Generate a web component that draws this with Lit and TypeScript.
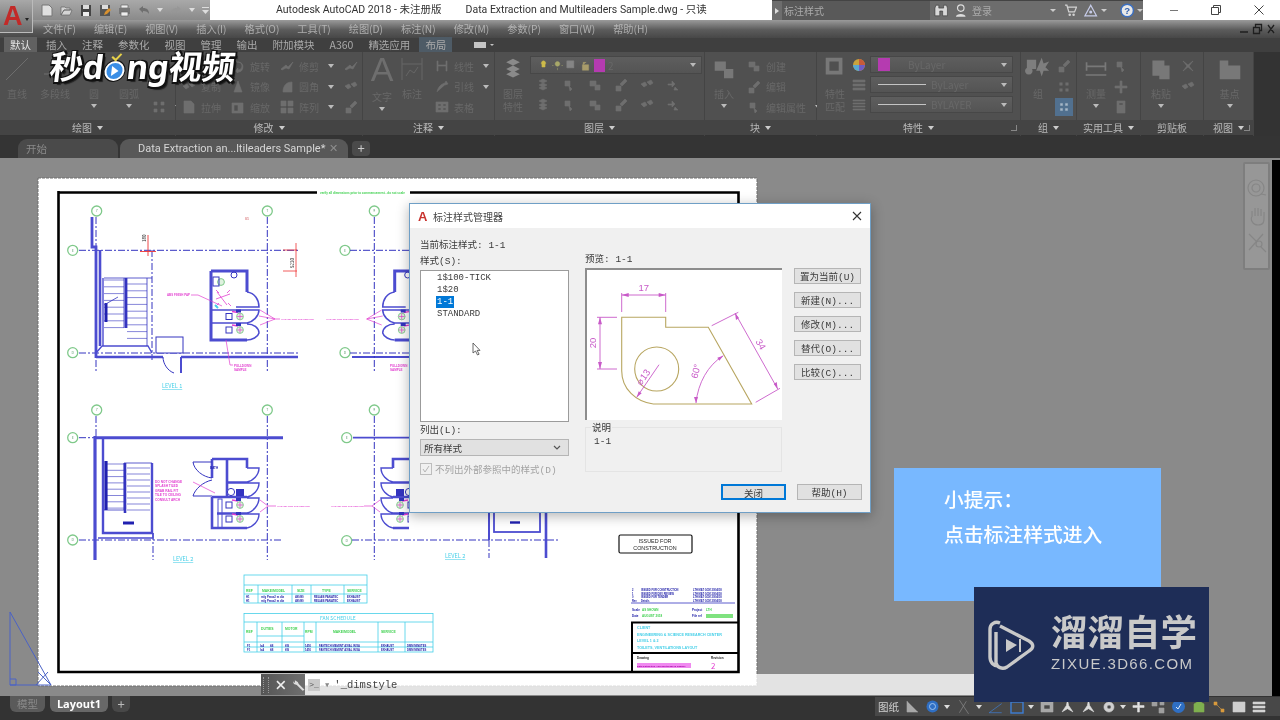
import { LitElement, html, css, svg } from 'lit';
import { customElement } from 'lit/decorators.js';

const CJK = css`"Noto Sans CJK SC", "Noto Sans", sans-serif`;
const MONO = css`"Liberation Mono", "Noto Sans CJK SC", monospace`;

const BLUE = '#3434c0';
const WALL = '#4c4cd0';
const PINK = '#e23fd0';
const CYAN = '#45cfe8';
const GREEN = '#3fd04f';
const RING = '#7fc98a';

// ---------- ribbon icons, all dimmed because the dialog is modal ----------
const ic = (d: string, w = 14, color = '#6e6e6e') => html`<svg width=${w} height=${w} viewBox="0 0 14 14"><path d=${d} fill=${color} stroke=${color} stroke-width="0.6"/></svg>`;
const I = {
  move: 'M2 6h4V3l3 3-3 3V7H2zM9 9l3 3H8z',
  rotate: 'M3 7a4 4 0 1 1 4 4v-2l-3 3 3 2v-1a5 5 0 1 0-5-6z',
  trim: 'M1 10L6 6l2 2 5-5-4 7-3-1-4 2z',
  copy: 'M1 6l4-2 2 3-3 2zM7 4l4-2 2 3-3 2z',
  mirror: 'M7 1L3 12h8z',
  fillet: 'M3 12C3 5 7 2 12 2v10z',
  stretch: 'M2 1h7l3 3v9H2zM5 8h5v4H5z',
  scale: 'M1 3h11v10H1zM3 5v6h4V5z',
  array: 'M1 1h5v5H1zM8 1h5v5H8zM1 8h5v5H1zM8 8h5v5H8z',
  lead: 'M2 12C3 7 6 4 10 3l1-2 2 3-3 1',
  table: 'M1 2h12v10H1zM3 4v2h3V4zM8 4v2h3V4zM3 8v2h3V8zM8 8v2h3V8z',
  linear: 'M2 2h1v10H2zM11 2h1v10h-1zM3 6h8v1H3z',
  layer: 'M3 3l4-2 4 2-4 2zM3 7l4-2 4 2-4 2zM3 10l4-2 4 2-4 2z',
  create: 'M2 3h6v5H2zM7 7h5v5H7z',
  edit: 'M2 8h5v5H2zM6 6l5-5 2 2-5 5z',
  attr: 'M3 3h5v5H3zM7 8l3 3-2 2z',
  plus: 'M6 1h2v5h5v2H8v5H6V8H1V6h5z',
  calc: 'M3 1h8v12H3zM5 3v2h4V3z',
  dots: 'M2 2h3v3H2zM9 2h3v3H9zM2 9h3v3H2zM9 9h3v3H9z',
  x: 'M2 2l5 4 5-4-4 5 4 5-5-4-5 4 4-5z',
};
const arrow = html`<i class="tri"></i>`;

// ---------- the sheet: page coordinates, free canvas ----------
const axis = (x1: number, y1: number, x2: number, y2: number) =>
  svg`<line x1=${x1} y1=${y1} x2=${x2} y2=${y2} stroke=${BLUE} stroke-width="1" stroke-dasharray="7 2 2 2"/>`;
const bubble = (x: number, y: number, t: string) => svg`
  <circle cx=${x} cy=${y} r="5" fill="#fff" stroke=${RING} stroke-width="1.3"/>
  <text x=${x} y=${y + 1.3} font-size="3.6" text-anchor="middle" fill="#5f9f70">${t}</text>`;
const label = (x: number, y: number, t: string, color = PINK, size = 3) =>
  svg`<text x=${x} y=${y} font-size=${size} font-weight="700" fill=${color} font-family="Liberation Sans, sans-serif">${t}</text>`;
const wall = (d: string, w = 2) => svg`<path d=${d} fill="none" stroke=${WALL} stroke-width=${w}/>`;
const thin = (d: string, c = BLUE, w = 0.8) => svg`<path d=${d} fill="none" stroke=${c} stroke-width=${w}/>`;

const fixture = (x: number, y: number) => svg`
  <circle cx=${x} cy=${y} r="3.4" fill="#dff2df" stroke=${RING} stroke-width="0.9"/>
  <path d="M${x - 3} ${y}h6M${x} ${y - 3}v6" stroke=${PINK} stroke-width="0.7"/>
  <rect x=${x - 14} y=${y - 3} width="6" height="6" fill="none" stroke=${BLUE}/>
  <path d="M${x - 8} ${y - 5}l6 1" stroke=${PINK} stroke-width="1.4"/>
  <rect x=${x - 4} y=${y - 7} width="5" height="3" fill=${BLUE}/>`;

const toiletTop = () => svg`
  ${wall('M211 271H247V292M211 271V340H247', 3)}
  ${wall('M247 292C255 293 259 300 259 307H236M212 310H259C259 316 253 322 247 323H212M247 324C254 324 259 328 259 333 258 337 252 340 247 340', 1.5)}
  <circle cx="234" cy="275" r="3" fill="none" stroke=${BLUE}/>
  <circle cx="221" cy="282" r="3.4" fill="#dff2df" stroke=${RING}/>
  <rect x="213" y="277" width="6" height="9" fill="none" stroke=${BLUE}/>
  <path d="M216 299l14-5M217 292l10 13M230 290l-3 3M216 290l3 3M216 306l3-3M231 306l-3-3" stroke=${PINK} stroke-width="0.8"/>
  <path d="M215 305l3 3" stroke=${CYAN} stroke-width="2"/>
  ${fixture(240, 316.5)} ${fixture(240, 330)}`;

const toiletBottom = () => svg`
  ${wall('M212 497H247M212 459H247V468M227 459V496M212 459V478M212 497V528H247', 2.6)}
  ${wall('M247 468H259C259 475 253 481 247 482H227M227 483H259C259 490 253 496 247 497M247 498H259C259 505 253 512 247 513H217M217 514H259C259 521 253 527 247 528', 1.4)}
  ${thin('M193 462H212M193 462C194 470 203 477 212 478M212 480C203 482 195 489 193 496H212', BLUE, 1)}
  <rect x="218" y="499" width="4" height="29" fill="none" stroke=${WALL}/>
  <circle cx="231" cy="492" r="3.6" fill="#fff" stroke=${BLUE}/>
  <rect x="236" y="489" width="8" height="7" fill=${BLUE}/>
  ${fixture(240, 505)} ${fixture(240, 519)}`;

const treads = (x1: number, x2: number, y1: number, n: number, step = 6.8) => {
  const rows = [];
  for (let i = 0; i < n; i++) rows.push(svg`<path d="M${x1} ${y1 + i * step}H${x2}" stroke=${BLUE} stroke-width="0.6"/>`);
  return rows;
};

const sheet = () => html`
  <svg class="sheet" viewBox="0 158 1280 538" width="1280" height="538">
    <rect x="38" y="178" width="719" height="508" fill="#fff" stroke="#6e6e6e" stroke-dasharray="3 1"/>
    <path d="M58.5 192.5H317M410 192.5H738.5V672H58.5V191" fill="none" stroke="#000" stroke-width="2.6"/>
    ${label(320, 194, 'verify all dimensions prior to commencement - do not scale', GREEN, 3)}
    ${label(245, 220, '01', '#d9777a', 3.5)}

    <!-- level 1 -->
    ${axis(79, 250.3, 298, 250.3)} ${axis(79, 353, 298, 353)}
    ${axis(267.3, 217, 267.3, 373)} ${axis(96, 217, 96, 372)} ${axis(152, 250, 152, 360)}
    ${[[96.7, 211, '7'], [267.3, 211, '7'], [374.3, 211, '9']].map(([x, y, t]) => bubble(x as number, y as number, t as string))}
    ${[[72.7, 250.3, 'E'], [72.7, 352.7, 'D'], [345, 250.3, 'E'], [345, 352.7, 'D']].map(([x, y, t]) => bubble(x as number, y as number, t as string))}
    ${wall('M92 217V247H96V358', 2.8)}
    ${wall('M100 250V346M96 357H163M181 357H298', 2.6)}
    ${wall('M102 346H148L152 353M102 346L96 353M103 278V346', 1.4)}
    ${thin('M104 278H152M124 278V328M147 278V346')}
    ${treads(104, 124, 280, 8)} ${treads(127, 147, 284, 9)}
    ${thin('M126 278V328', BLUE, 2.8)}
    ${thin('M106 303V322', '#2020b0', 3)}
    ${thin('M104 305L118 297')}
    <rect x="156" y="337" width="27" height="16" fill="#fff" stroke=${BLUE}/>
    ${thin('M163 357C163 364 168 371 174 373', BLUE, 1)} ${thin('M181 357V373', WALL, 2)}
    ${toiletTop()}
    ${thin('M191 295H198L222 306', PINK, 0.7)} ${label(167, 296, 'ABS FINISH PAP', PINK, 2.9)}
    ${thin('M226 340L230 365H233M260 310L275 319 260 325M259 316L275 319H280', PINK, 0.7)}
    ${label(281, 320, 'HAZARD PIPE THE SERVICE', PINK, 2.4)}
    ${label(234, 367, 'PULLDOWN')} ${label(234, 371, 'SAMPLE')}
    ${thin('M148 235V256M140 251.5H156', '#e33', 0.9)}
    <text transform="translate(145.5 242) rotate(-90)" font-size="4.5" fill="#222">180</text>
    ${thin('M296 243V277M283 271H297M283 250H297', '#e33', 0.8)}
    <text transform="translate(293.5 268) rotate(-90)" font-size="4.5" fill="#222">5230</text>
    <text x="162" y="388" font-size="5.6" fill=${CYAN} text-decoration="underline">LEVEL 1</text>
    ${label(326, 320, 'HAZARD PIPE THE SERVICE', PINK, 2.4)} ${label(390, 367, 'PULLDOWN')} ${label(390, 371, 'SAMPLE')}
    ${wall('M352 357H409', 1.8)} ${axis(350, 250.3, 409, 250.3)} ${axis(350, 353, 409, 353)} ${axis(374.3, 217, 374.3, 372)}
    <svg x="0" y="158" width="409" height="538" viewBox="0 158 409 538"><g transform="translate(641.7 0) scale(-1 1)">
      ${toiletTop()} ${thin('M260 310L275 319 260 325M259 316L275 319', PINK, 0.7)}
    </g></svg>

    <!-- level 2 -->
    ${[[96.7, 410, '7'], [267.3, 410, '7'], [374.3, 410, '9']].map(([x, y, t]) => bubble(x as number, y as number, t as string))}
    ${[[72.7, 437.7, 'E'], [72.7, 540, 'D'], [346.7, 437.7, 'E'], [346.7, 540.7, 'D']].map(([x, y, t]) => bubble(x as number, y as number, t as string))}
    ${axis(267.3, 416, 267.3, 560)} ${axis(96, 416, 96, 436)} ${axis(374.3, 416, 374.3, 560)} ${axis(153, 533, 153, 560)}
    ${axis(79, 540, 283, 540)} ${axis(352, 540, 560, 540)} ${axis(79, 437.7, 96, 437.7)}
    ${wall('M95 437.7H283', 3)} ${wall('M95 436V560', 3.2)} ${wall('M353 437.7H409', 1.8)}
    ${wall('M103 438V533H152V463', 2.4)} ${wall('M98 538H153V533', 1.6)}
    ${thin('M124 463H152M124 463V510M104 510H124')}
    ${treads(105, 124, 464, 8, 6.3)} ${treads(127, 150, 468, 8, 6)}
    ${thin('M125 463V513', BLUE, 2.6)} ${thin('M106 461V510', '#2020b0', 3.2)}
    ${thin('M123 523H134', '#2020b0', 3)}
    ${toiletBottom()}
    ${thin('M193 482L215 493', PINK, 0.7)}
    ${['DO NOT CHANGE', 'SPLASH TILED', 'GRAB RAIL FIT', 'TILE TO CEILING', 'CONSULT ARCH'].map((t, i) => label(155, 483 + i * 4.4, t, PINK, 3.2))}
    ${label(210, 469, 'BATH', '#2020b0', 3)}
    ${thin('M260 500L268 506 260 512M268 506H276', PINK, 0.7)} ${label(277, 507, 'HAZARD PIPE THE SERVICE', PINK, 2.4)}
    ${thin('M364 506H372', PINK, 0.7)} ${label(331, 507, 'HAZARD PIPE THE SERVICE', PINK, 2.4)}
    <svg x="0" y="158" width="409" height="538" viewBox="0 158 409 538"><g transform="translate(640 0) scale(-1 1)">
      ${toiletBottom()} ${thin('M260 500L268 506 260 512', PINK, 0.7)}
    </g></svg>
    <text x="173" y="561" font-size="5.6" fill=${CYAN} text-decoration="underline">LEVEL 2</text>
    <text x="445" y="558" font-size="5.6" fill=${CYAN} text-decoration="underline">LEVEL 2</text>
    <rect x="494" y="510" width="46" height="22" fill="none" stroke=${WALL} stroke-width="1.8"/>
    ${thin('M510 522.5H520', '#2020b0', 2.4)}
    ${thin('M489 510V540', WALL, 2)} ${wall('M546 510V558', 2.6)} ${axis(489, 540, 489, 558)}

    <!-- schedules -->
    <g fill="none" stroke=${CYAN} stroke-width="0.8">
      <rect x="244" y="575" width="123" height="28"/>
      <path d="M244 585H367M244 594H367M258 585V603M292 585V603M311 585V603M344 585V603"/>
      <rect x="244" y="613.5" width="189" height="38.5"/>
      <path d="M244 622H433M244 642H433M244 647H433M257 622V652M282 622V652M304 622V652M316 622V652M378 622V652M405 622V652M282 636H304M257 636H282"/>
    </g>
    ${[['REF', 246], ['MAKE/MODEL', 262], ['SIZE', 297], ['TYPE', 322], ['SERVICE', 347]].map(([t, x]) => label(x as number, 591.5, t as string, GREEN, 3.4))}
    ${[598.5, 602].map((y) => ['H1', 'mfg Pmax2 m dia', '480/80', 'RELIAB PANATEC', 'EXHAUST'].map((t, i) => label([246, 261, 295, 314, 347][i], y - 0.5, t, '#2020a8', 2.8)))}
    <text x="320" y="620" font-size="5" fill=${CYAN}>FAN SCHEDULE</text>
    ${[['REF', 246, 633], ['DUTIES', 261, 630], ['MOTOR', 285, 630], ['RPM', 305, 633], ['MAKE/MODEL', 333, 633], ['SERVICE', 381, 633]].map(([t, x, y]) => label(x as number, y as number, t as string, GREEN, 3.4))}
    ${[647, 651.4].map((y) => ['F1', 'lsA', 'kB', 'kW', '1450', 'FANTECH MAVENT AXIAL IN/3A', 'EXHAUST', 'DMM MINUTES'].map((t, i) => label([247, 260, 270, 285, 305, 319, 381, 407][i], y - 0.4, t, '#2020a8', 2.7)))}

    <!-- title block -->
    <rect x="619" y="535" width="73" height="18" rx="1.5" fill="#fff" stroke="#111" stroke-width="1.2"/>
    <text x="655" y="543" font-size="5.4" fill="#222" text-anchor="middle" font-family="Liberation Sans, sans-serif">ISSUED FOR</text>
    <text x="655" y="550" font-size="5.4" fill="#222" text-anchor="middle" font-family="Liberation Sans, sans-serif">CONSTRUCTION</text>
    ${[591, 594.5, 598, 602].map((y, i) => svg`
      ${label(632, y, ['2', '1', '0', 'Rev'][i], '#2020a8', 2.6)}
      ${label(641, y, ['ISSUED FOR CONSTRUCTION', 'ISSUED FOR DEV REVIEW', 'ISSUED FOR TENDER', 'Details'][i], '#2020a8', 2.6)}
      ${label(693, y, 'LTH   MAT  GCM   20/04/18', '#2020a8', 2.6)}`)}
    ${thin('M631 603H735')}
    ${label(632, 611, 'Scale', '#2020a8', 3)} ${label(642, 611, 'AS SHOWN', GREEN, 3)}
    ${label(692, 611, 'Project', '#2020a8', 3)} ${label(706, 611, 'LTH', GREEN, 3)}
    ${label(632, 617, 'Date', '#2020a8', 3)} ${label(642, 617, 'AUGUST 2018', GREEN, 3)}
    ${label(692, 617, 'File ref', '#2020a8', 3)}
    <rect x="706" y="614" width="27" height="4" fill="#7fe27f"/>
    ${thin('M632 672V622.5H738M632 653H738', '#000', 2)}
    ${['CLIENT', 'ENGINEERING & SCIENCE RESEARCH CENTER', 'LEVEL 1 & 2', 'TOILETS, VENTILATIONS LAYOUT'].map((t, i) => label(637, 629 + i * 6.6, t, CYAN, 3.7))}
    ${label(637, 659, 'Drawing', '#222', 3)} ${label(711, 659, 'Revision', '#222', 3)}
    <rect x="637" y="663" width="54" height="5" fill="#f08af0"/>
    ${label(637, 667, 'Data Extraction And Multileaders Sample', '#a000a0', 2.5)}
    <text x="711" y="669" font-size="8" fill=${PINK}>2</text>

    <!-- ucs -->
    <g fill="none" stroke="#4a62c6" stroke-width="1">
      <path d="M10 612V685H51ZM10 679h6v6h-6M36 685L48 672M38 672L51 685"/>
    </g>
  </svg>`;

// ---------- preview pane of the dialog ----------
const preview = () => html`
  <svg class="preview" viewBox="585 269 197 151" width="197" height="151">
    <g fill="none" stroke="#b8a661" stroke-width="1.1">
      <path d="M621.7 318.3H665.7V328.3H708.3L751.7 405H653.3C636 403 621.7 390 621.7 371.7Z"/>
      <circle cx="656.7" cy="370" r="22"/>
    </g>
    <g fill="none" stroke="#c85ac8" stroke-width="0.9">
      <path d="M621.7 313V294M665.7 313V294M621.7 296H665.7"/>
      <path d="M617 318.3H597M617 370H597M600 318.3V370"/>
      <path d="M711.7 326.7L738.3 313.3M755.7 403.3L780 389.3M735 314L777.7 390"/>
      <path d="M696 404C698 384 708 366 723.3 356.7"/>
      <path d="M659 365.7L636.7 398.3"/>
    </g>
    <g fill="#c85ac8">
      <path d="M621.7 296l7-2v4zM665.7 296l-7-2v4zM600 318.3l-2 7h4zM600 370l-2-7h4zM735 314l1 7 3-2zM777.7 390l-1-7-3 2zM723.3 356.7l-6 2 2 3zM696 404l-2-6 4 0zM636.7 398.3l2-6 3 2z"/>
    </g>
    <g fill="#c85ac8" font-size="9.5" font-family="Liberation Sans Narrow, Liberation Sans, sans-serif" text-anchor="middle">
      <text x="643.7" y="292">17</text>
      <text transform="translate(596 344) rotate(-90)">20</text>
      <text transform="translate(758 347) rotate(60)">34</text>
      <text transform="translate(699 373) rotate(-75)">60°</text>
      <text transform="translate(646 380) rotate(-55)">⌀13</text>
    </g>
  </svg>`;

@customElement('dim-dialog')
export class DimDialog extends LitElement {
  static styles = css`
    :host {
      position: absolute;
      left: 409px;
      top: 45px;
      width: 462px;
      height: 310px;
      box-sizing: border-box;
      display: flex;
      flex-direction: column;
      background: #f0f0f0;
      border: 1px solid #6f9fc6;
      box-shadow: 0 3px 12px rgba(0, 0, 0, 0.3);
      font: 9.5px ${MONO};
      color: #3a3a3a;
    }
    .title {
      height: 24px;
      flex: none;
      background: #fff;
      display: flex;
      align-items: center;
      padding: 0 8px;
      gap: 5px;
      font: 10px ${CJK};
      color: #444;
    }
    .logo { font: bold 13px "Liberation Sans", sans-serif; color: #c8322d; width: 10px; }
    .close { margin-left: auto; width: 10px; height: 10px; }
    .main {
      flex: 1;
      display: grid;
      grid-template-columns: 149px 196px 67px;
      grid-template-rows: 15px 1fr;
      column-gap: 16px;
      padding: 10px 0 0 10px;
      position: relative;
    }
    .current { grid-column: 1 / 4; height: 15px; line-height: 15px; }
    .col { display: flex; flex-direction: column; }
    .head { height: 17px; line-height: 17px; }
    .head.up { margin-top: -2px; }
    .list {
      height: 152px;
      box-sizing: border-box;
      background: #fff;
      border: 1px solid #9b9b9b;
      padding: 1px 0 0 16px;
      display: flex;
      flex-direction: column;
      align-items: flex-start;
      font-size: 9px;
      line-height: 12px;
    }
    .list .sel { background: #0078d7; color: #fff; padding: 0 1px; margin-left: -1px; }
    .sub { height: 17px; line-height: 18px; }
    .select {
      height: 17px;
      box-sizing: border-box;
      background: #e1e1e1;
      border: 1px solid #b5b5b5;
      font-family: ${CJK};
      padding: 0 7px 0 3px;
      display: flex;
      align-items: center;
      justify-content: space-between;
    }
    .check { display: flex; align-items: center; gap: 3px; margin-top: 6px; color: #a3a3a3; }
    .box { width: 10px; height: 10px; border: 1px solid #bdbdbd; display: flex; }
    .pane {
      width: 197px;
      height: 152px;
      box-sizing: border-box;
      background: #fff;
      border-left: 2px solid #8d8d8d;
      border-top: 2px solid #8d8d8d;
      overflow: hidden;
    }
    .pane svg { display: block; margin: -2px 0 0 -2px; }
    .note {
      margin-top: 7px;
      height: 45px;
      width: 197px;
      box-sizing: border-box;
      border: 1px solid #e4e4e4;
      padding: 8px 0 0 8px;
      position: relative;
    }
    .legend { position: absolute; top: -8px; left: 5px; padding: 0 1px; background: #f0f0f0; }
    .btns { display: flex; flex-direction: column; gap: 8px; padding-top: 15px; margin-left: -3px; }
    button {
      box-sizing: border-box;
      height: 16px;
      width: 67px;
      padding: 0;
      background: #e1e1e1;
      border: 1px solid #b5b5b5;
      font: 9.5px ${MONO};
      color: #3a3a3a;
    }
    .foot { position: absolute; right: 8px; bottom: 12px; display: flex; gap: 11px; }
    .foot button { width: 65px; }
    .foot .ok { border: 2px solid #0078d7; }
    .cursor { position: absolute; left: 62px; top: 114px; }
  `;

  render() {
    return html`
      <div class="title">
        <span class="logo">A</span><span>标注样式管理器</span>
        <svg class="close" viewBox="0 0 10 10"><path d="M1 1l8 8M9 1l-8 8" stroke="#333" stroke-width="1.1"/></svg>
      </div>
      <div class="main">
        <div class="current">当前标注样式: 1-1</div>
        <div class="col">
          <div class="head">样式(S):</div>
          <div class="list">
            <span>1$100-TICK</span><span>1$20</span><span class="sel">1-1</span><span>STANDARD</span>
          </div>
          <div class="sub">列出(L):</div>
          <div class="select">所有样式
            <svg width="8" height="6" viewBox="0 0 8 6"><path d="M1 1l3 3 3-3" fill="none" stroke="#555" stroke-width="1.2"/></svg>
          </div>
          <div class="check">
            <span class="box"><svg viewBox="0 0 10 10"><path d="M2 5l2 3 4-6" fill="none" stroke="#b5b5b5"/></svg></span>
            不列出外部参照中的样式(D)
          </div>
        </div>
        <div class="col">
          <div class="head up">预览: 1-1</div>
          <div class="pane">${preview()}</div>
          <div class="note"><span class="legend">说明</span>1-1</div>
        </div>
        <div class="btns">
          <button>置为当前(U)</button>
          <button>新建(N)...</button>
          <button>修改(M)...</button>
          <button>替代(O)...</button>
          <button>比较(C)...</button>
        </div>
        <svg class="cursor" width="9" height="14" viewBox="0 0 9 14"><path d="M1 1v10l2.5-2 2 4 1.6-.8-2-3.800H8z" fill="#fff" stroke="#444" stroke-width="0.8"/></svg>
      </div>
      <div class="foot"><button class="ok">关闭</button><button>帮助(H)</button></div>
    `;
  }
}

@customElement('cad-ribbon')
export class CadRibbon extends LitElement {
  static styles = css`
    :host { display: flex; height: 84px; flex: none; background: #333; font: 10px ${CJK}; color: #686868; }
    .p { display: flex; flex-direction: column; flex: none; background: #505050; border-right: 1px solid #444; box-sizing: border-box; }
    .b { height: 68px; display: flex; padding: 4px 4px 0 6px; box-sizing: border-box; gap: 6px; }
    .t { height: 15px; background: #444; display: flex; align-items: center; justify-content: center; gap: 5px; color: #b8b8b8; border-bottom: 1px solid #333; position: relative; }
    .tri { display: inline-block; border: 3px solid transparent; border-top: 4px solid currentColor; border-bottom: 0; }
    .t .tri { color: #ccc; }
    .t .corner { position: absolute; right: 3px; width: 5px; height: 5px; border-right: 1px solid #888; border-bottom: 1px solid #888; }
    .big { display: flex; flex-direction: column; align-items: center; gap: 1px; line-height: 12px; flex: none; width: 26px; }
    .big .tri { color: #bbb; margin-top: 3px; }
    .big svg { margin-bottom: 5px; }
    .rows { display: grid; grid-auto-rows: 20.5px; align-items: center; justify-items: center; }
    .rows.lab { justify-items: start; }
    .s { display: flex; align-items: center; gap: 5px; white-space: nowrap; }
    .s .tri { color: #bbb; margin-left: 4px; }
    .w22 { width: 22px; }
    .w24 { width: 24px; }
    .w32 { width: 32px; }
    .w42 { width: 42px; }
    .w48 { width: 48px; }
    .w60 { width: 60px; }
    .draw { width: 176px; }
    .draw .b { gap: 11px; }
    .draw .low { padding-top: 41px; }
    .modify { width: 187px; }
    .modify .b { gap: 10px; }
    .note { width: 132px; }
    .note .b { gap: 8px; padding-left: 8px; }
    .note .glyph { font: 34px/32px "Liberation Sans", sans-serif; color: #6e6e6e; margin-bottom: 5px; }
    .note .up { margin-top: -3px; }
    .note .rows { margin-left: 4px; }
    .layers { width: 210px; }
    .layers .b { gap: 5px; }
    .layers .right { flex: 1; }
    .layers .dd { gap: 3px; width: 172px; height: 18px; }
    .layers .swatch { width: 11px; }
    .layers .rows { grid-template-columns: repeat(6, 26px); grid-auto-rows: 20px; margin-top: 1px; }
    .block { width: 112px; }
    .block .b { gap: 10px; }
    .props { width: 204px; }
    .props .b { gap: 4px; padding-left: 5px; }
    .props .rows { grid-auto-rows: 20px; margin-top: -1px; }
    .props .stack { flex: 1; display: flex; flex-direction: column; gap: 3px; margin-right: 3px; }
    .props .swatch { margin-right: 13px; }
    .group { width: 56px; }
    .group .b { gap: 4px; padding-left: 4px; }
    .util { width: 64px; }
    .util .b { padding-left: 7px; }
    .clip { width: 63px; }
    .clip .b { gap: 8px; padding-left: 8px; }
    .view { width: 50px; }
    .view .b { justify-content: center; }
    .dd {
      height: 17px;
      box-sizing: border-box;
      background: linear-gradient(#5e5e5e, #545454);
      border: 1px solid #474747;
      display: flex;
      align-items: center;
      padding: 0 5px 0 7px;
      gap: 5px;
    }
    .dd .tri { margin-left: auto; color: #bbb; }
    .swatch { width: 12px; height: 13px; background: #b53bb0; flex: none; }
    .line { height: 1px; background: #c4c4c4; width: 48px; flex: none; }
    .blue { width: 18px; height: 18px; background: #51708f; display: flex; align-items: center; justify-content: center; }
  `;

  private head(t: string, corner = false, showArrow = true) {
    return html`<div class="t">${t}${showArrow ? arrow : ''}${corner ? html`<i class="corner"></i>` : ''}</div>`;
  }

  private small(icon: string, text = '', more = false) {
    return html`<div class="s">${ic(icon)}<span>${text}</span>${more ? arrow : ''}</div>`;
  }

  render() {
    const layerIcons = [I.layer, I.attr, I.create, I.edit, I.copy, I.move];
    return html`
      <div class="p draw">
        <div class="b">
          <div class="big w22"><svg width="26" height="26" viewBox="0 0 26 26"><path d="M2 24L24 2" stroke="#6e6e6e"/></svg>直线</div>
          <div class="big w32"><svg width="26" height="26" viewBox="0 0 26 26"><path d="M2 18H16" stroke="#6e6e6e"/></svg>多段线</div>
          <div class="big w24"><svg width="26" height="26"></svg>圆${arrow}</div>
          <div class="big w24"><svg width="26" height="26"></svg>圆弧${arrow}</div>
          <div class="rows low"><div class="s">${ic(I.dots)}${arrow}</div></div>
        </div>
        ${this.head('绘图')}
      </div>
      <div class="p modify">
        <div class="b">
          <div class="rows lab w48">${this.small(I.move, '移动')}${this.small(I.copy, '复制')}${this.small(I.stretch, '拉伸')}</div>
          <div class="rows lab w42">${this.small(I.rotate, '旋转')}${this.small(I.mirror, '镜像')}${this.small(I.scale, '缩放')}</div>
          <div class="rows lab w60">${this.small(I.trim, '修剪', true)}${this.small(I.fillet, '圆角', true)}${this.small(I.array, '阵列', true)}</div>
          <div class="rows">${this.small(I.trim)}${this.small(I.copy)}${this.small(I.edit)}</div>
        </div>
        ${this.head('修改')}
      </div>
      <div class="p note">
        <div class="b">
          <div class="big w22 up"><span class="glyph">A</span>文字${arrow}</div>
          <div class="big w22"><svg width="24" height="26" viewBox="0 0 24 26"><path d="M2 2V24M22 2V24M2 8H22M6 20l4-6 4 3 4-6" fill="none" stroke="#666"/></svg>标注</div>
          <div class="rows lab">${this.small(I.linear, '线性', true)}${this.small(I.lead, '引线', true)}${this.small(I.table, '表格')}</div>
        </div>
        ${this.head('注释')}
      </div>
      <div class="p layers">
        <div class="b">
          <div class="big w24"><svg width="24" height="26" viewBox="0 0 14 14"><path d=${I.layer} fill="#8a8a8a"/></svg>图层<span>特性</span></div>
          <div class="right">
            <div class="dd">
              ${ic('M7 1a3 3 0 0 1 2 5v3H5V6a3 3 0 0 1 2-5z', 11, '#cdbb4a')}
              ${ic('M7 2a3 3 0 1 1-.1 0zM7 10v3M2 7H0M14 7h-2', 11, '#a8a869')}
              ${ic('M1 1h9v9H1z', 11, '#858585')}
              ${ic('M3 6h8v7H3zM4 6V3h4', 11, '#a99c6b')}
              <span class="swatch"></span><span>2</span>${arrow}
            </div>
            <div class="rows">
              ${layerIcons.map((d) => ic(d))}
              ${layerIcons.map((d) => ic(d))}
            </div>
          </div>
        </div>
        ${this.head('图层')}
      </div>
      <div class="p block">
        <div class="b">
          <div class="big"><svg width="26" height="26" viewBox="0 0 14 14"><path d=${I.create} fill="#787878"/></svg>插入${arrow}</div>
          <div class="rows lab">${this.small(I.create, '创建')}${this.small(I.edit, '编辑')}${this.small(I.attr, '编辑属性', true)}</div>
        </div>
        ${this.head('块')}
      </div>
      <div class="p props">
        <div class="b">
          <div class="big"><svg width="26" height="26" viewBox="0 0 14 14"><path d="M2 1h9v9H2zM4 3v5h5V3z" fill="#787878"/></svg>特性<span>匹配</span></div>
          <div class="rows">
            <svg width="14" height="14" viewBox="0 0 14 14"><circle cx="7" cy="7" r="6" fill="#c9a33c"/><path d="M7 7L7 1A6 6 0 0 1 13 7Z" fill="#c75a3b"/><path d="M7 7L13 7A6 6 0 0 1 7 13Z" fill="#6f5cc4"/><path d="M7 7V13A6 6 0 0 1 1 7Z" fill="#58a8d0"/></svg>
            ${ic('M1 2h12v2H1zM1 6h12v2H1zM1 10h12v2H1z')}
            ${ic('M1 2h12v1H1zM1 5h12v1H1zM1 8h12v1H1zM1 11h12v1H1z')}
          </div>
          <div class="stack">
            <div class="dd"><span class="swatch"></span>ByLayer ${arrow}</div>
            <div class="dd"><span class="line"></span>ByLayer ${arrow}</div>
            <div class="dd"><span class="line"></span>BYLAYER ${arrow}</div>
          </div>
        </div>
        ${this.head('特性', true)}
      </div>
      <div class="p group">
        <div class="b">
          <div class="big"><svg width="26" height="26" viewBox="0 0 14 14"><path d="M1 2h5v5H1zM2 10a2 2 0 1 1 .1 0zM9 1l1 3 3-1-2 3 2 2-3 0-1 3-1-3-2 0z" fill="#7e7e7e"/></svg>组</div>
          <div class="rows">${ic(I.edit)}${ic(I.dots, 12)}<div class="blue">${ic(I.dots, 10, '#a8b8c8')}</div></div>
        </div>
        ${this.head('组')}
      </div>
      <div class="p util">
        <div class="b">
          <div class="big w24"><svg width="24" height="26" viewBox="0 0 14 14"><path d="M1 3h1v5H1zM12 3h1v5h-1zM2 5h10v1H2zM1 10h12v1H1z" fill="#787878"/></svg>测量${arrow}</div>
          <div class="rows">${ic(I.attr)}${ic(I.plus)}${ic(I.calc)}</div>
        </div>
        ${this.head('实用工具')}
      </div>
      <div class="p clip">
        <div class="b">
          <div class="big w24"><svg width="24" height="26" viewBox="0 0 14 14"><path d="M2 2h7v3h3v8H6v-2H2z" fill="#787878"/></svg>粘贴${arrow}</div>
          <div class="rows">${ic(I.x)}${ic(I.copy)}</div>
        </div>
        ${this.head('剪贴板', false, false)}
      </div>
      <div class="p view">
        <div class="b">
          <div class="big"><svg width="24" height="26" viewBox="0 0 14 14"><path d="M1 2h5v3h7v8H1z" fill="#787878"/></svg>基点${arrow}</div>
        </div>
        ${this.head('视图', true)}
      </div>
    `;
  }
}

@customElement('app-root')
export class AppRoot extends LitElement {
  static styles = css`
    :host {
      display: flex;
      flex-direction: column;
      width: 1280px;
      height: 720px;
      overflow: hidden;
      position: relative;
      background: #8a8a8a;
      font-family: ${CJK};
      filter: blur(0.35px);
    }
    .titlebar { height: 20px; flex: none; display: flex; background: #fff; }
    .qat {
      width: 210px;
      box-sizing: border-box;
      padding-left: 41px;
      display: flex;
      align-items: center;
      gap: 7px;
      background: linear-gradient(#a9a9a9, #8a8a8a);
    }
    .doc { flex: 1; padding-left: 66px; font: 10.5px/20px Roboto, ${CJK}; color: #333; white-space: nowrap; }
    .doc span { margin-left: 24px; }
    .search {
      width: 371px;
      background: #6d6d6d;
      display: flex;
      align-items: center;
      box-sizing: border-box;
      padding-left: 3px;
      font-size: 10px;
      color: #aaa;
      border-top: 1px solid #444;
    }
    .sbox { width: 148px; height: 19px; line-height: 19px; background: #595959; padding-left: 2px; box-sizing: border-box; margin: 0 4px 0 3px; flex: none; }
    .search .go { border-left: 4px solid #ddd; border-top: 3px solid transparent; border-bottom: 3px solid transparent; }
    .search .tri { display: inline-block; border: 3px solid transparent; border-top: 3px solid #ccc; border-bottom: 0; margin-left: 3px; }
    .search .user { margin-left: 7px; }
    .search .login { margin-left: 5px; width: 78px; }
    .search .cart { margin-left: 8px; }
    .search .net { margin-left: 7px; }
    .search .help { margin-left: 13px; }
    .win { width: 137px; display: flex; align-items: center; justify-content: space-around; padding-left: 10px; box-sizing: border-box; }
    .menu {
      height: 18px;
      flex: none;
      display: flex;
      align-items: center;
      gap: 18px;
      padding: 0 0 2px 43px;
      box-sizing: border-box;
      background: linear-gradient(#9a9a9a, #5b5b5b 55%, #474747);
      font-size: 10.2px;
      position: relative;
    }
    .menu span { color: #c8c8c8; opacity: 0.75; }
    .mdi { position: absolute; right: 4px; top: 3px; display: flex; }
    .app {
      position: absolute;
      left: 0;
      top: 0;
      width: 33px;
      height: 33px;
      background: linear-gradient(#a8a8a8, #6b6b6b);
      border-right: 1px solid #bbb;
      border-bottom: 1px solid #bbb;
      box-sizing: border-box;
      display: flex;
      align-items: center;
      padding-left: 3px;
      font: bold 27px "Liberation Sans", sans-serif;
      color: #c22a28;
    }
    .app::after { content: ''; border: 2px solid transparent; border-top: 3px solid #222; border-bottom: 0; margin: 6px 0 0 2px; }
    .tabs {
      height: 14px;
      flex: none;
      display: flex;
      gap: 15px;
      padding-left: 10px;
      background: #3f3f3f;
      font-size: 10.5px;
      line-height: 14px;
      color: #a9a9a9;
    }
    .tabs span { position: relative; white-space: nowrap; z-index: 0; }
    .tabs .on { color: #e4e4e4; }
    .tabs .on::before, .tabs .lay::before { content: ''; position: absolute; z-index: -1; inset: -1px -6px 0; background: #616161; }
    .tabs .lay::before { background: #4e5b66; }
    .tabs svg { margin: 3px 0 0 12px; }
    .files { height: 22px; flex: none; background: #343434; display: flex; align-items: flex-end; padding-left: 18px; font-size: 10.5px; color: #8a8a8a; }
    .ft { height: 19px; line-height: 19px; background: #4a4a4a; border-radius: 9px 9px 0 0; display: flex; box-sizing: border-box; }
    .ft.start { width: 100px; padding-left: 8px; }
    .ft.act { width: 228px; margin-left: 2px; padding-left: 18px; background: #585858; color: #d6d6d6; font: 11px/19px Roboto, sans-serif; position: relative; }
    .ft.act em { position: absolute; right: 10px; top: 0; font-style: normal; color: #8e8e8e; }
    .ft.add { width: 18px; height: 15px; line-height: 14px; margin: 0 0 2px 4px; justify-content: center; color: #ccc; border-radius: 4px; font-size: 13px; }
    .canvas { flex: 1; position: relative; overflow: hidden; background: #8a8a8a; }
    .sheet { position: absolute; left: 0; top: 0; }
    .strip { position: absolute; right: 0; top: 2px; bottom: 0; width: 8px; background: #000; }
    .nav {
      position: absolute;
      left: 1243px;
      top: 4px;
      width: 27px;
      height: 108px;
      box-sizing: border-box;
      background: #979797;
      border: 2px solid #7e7e7e;
      border-radius: 2px;
      display: flex;
      flex-direction: column;
      align-items: center;
      gap: 4px;
      padding-top: 13px;
    }
    .nav path, .nav circle { fill: none; stroke: #868686; stroke-width: 1.2; }
    .cmd {
      position: absolute;
      left: 261px;
      top: 516px;
      width: 714px;
      height: 21px;
      display: flex;
      background: rgba(255, 255, 255, 0.76);
    }
    .grip {
      width: 44px;
      background: linear-gradient(90deg, #555, #6f6f6f);
      display: flex;
      align-items: center;
      padding-left: 2px;
      gap: 6px;
      box-sizing: border-box;
      flex: none;
    }
    .grip b { width: 4px; height: 16px; border-left: 1px dotted #999; border-right: 1px dotted #999; margin-right: 1px; }
    .prompt { display: flex; align-items: center; gap: 4px; padding-left: 3px; font: 10.5px "Liberation Mono", monospace; color: #444; }
    .chev { width: 12px; height: 12px; background: #c9c9c9; font-size: 8px; line-height: 12px; text-align: center; color: #555; }
    .caret { color: #888; }
    .status { height: 24px; flex: none; background: #333; display: flex; align-items: flex-start; font-size: 10.5px; position: relative; }
    .mtab { height: 16px; line-height: 16px; border-radius: 0 0 6px 6px; background: #5a5a5a; text-align: center; color: #8a8a8a; }
    .model { width: 35px; margin-left: 10px; }
    .layout { width: 58px; margin-left: 5px; background: #686868; color: #fff; font: bold 11px/16px "Open Sans", sans-serif; }
    .addtab { width: 18px; margin-left: 4px; background: #484848; color: #bbb; font-size: 13px; }
    .tools {
      margin-left: auto;
      width: 405px;
      height: 19px;
      margin-top: 1px;
      background: #484848;
      display: flex;
      align-items: center;
      gap: 6px;
      padding-left: 3px;
      box-sizing: border-box;
      color: #d0d0d0;
      white-space: nowrap;
    }
    .tools svg, .tools span { flex: none; }
    .tools .tri { width: 0; border: 3px solid transparent; border-top: 4px solid #ddd; border-bottom: 0; margin-left: -2px; }
    .hint {
      position: absolute;
      left: 894px;
      top: 310px;
      width: 267px;
      height: 133px;
      box-sizing: border-box;
      padding: 13px 0 0 50px;
      background: #78b8ff;
      color: #fff;
      font-size: 19.8px;
      font-weight: 500;
      line-height: 35px;
    }
    .mark {
      position: absolute;
      left: 974px;
      top: 587px;
      width: 235px;
      height: 115px;
      background: #1e2d57;
      display: flex;
      align-items: center;
      gap: 16px;
      padding-left: 13px;
      box-sizing: border-box;
      color: #c9c9c9;
    }
    .words { margin-top: -2px; }
    .brand { font: 700 36.5px/38px "Liberation Sans", ${CJK}; white-space: nowrap; }
    .url { font: 15px/16px "Liberation Sans", sans-serif; letter-spacing: 1.35px; white-space: nowrap; margin-top: 3px; }
    .stamp {
      position: absolute;
      left: 50px;
      top: 45px;
      display: flex;
      align-items: center;
      color: #fff;
      font: 700 33px/44px "Noto Sans", ${CJK};
      transform: skewX(-7deg);
      text-shadow: 2px 2px 0 #111, -1px -1px 0 #111, 2px -1px 0 #111, -1px 2px 0 #111, 3px 3px 1px #222;
      white-space: nowrap;
    }
    .stamp .play { width: 16px; height: 16px; border-radius: 50%; background: #3a8ee6; border: 2px solid #fff; box-shadow: 0 0 0 1px #111; display: flex; align-items: center; justify-content: center; margin: 7px 2px 0 1px; position: relative; }
    .stamp .play::after { content: ''; border-left: 7px solid #fff; border-top: 5px solid transparent; border-bottom: 5px solid transparent; margin-left: 2px; }
    .stamp .play::before { content: ''; position: absolute; top: -10px; left: 4px; width: 7px; height: 4px; border-left: 2px solid #e7d24a; border-bottom: 2px solid #e7d24a; transform: rotate(-50deg); }
  `;

  render() {
    return html`
      <div class="titlebar">
        <div class="qat">
          <svg width="12" height="13" viewBox="0 0 12 13"><path d="M1 1h7l3 3v8H1z" fill="#e0e0e0" stroke="#777"/></svg>
          <svg width="13" height="13" viewBox="0 0 13 13"><path d="M1 3h4l1 1h4v2H4L1 11zM4 6h8l-2 5H1z" fill="#d4d4d4" stroke="#666" stroke-width="0.7"/></svg>
          <svg width="12" height="13" viewBox="0 0 12 13"><path d="M1 1h10v11H1z" fill="#444"/><path d="M3 1h6v4H3z" fill="#ddd"/><path d="M3 8h6v4H3z" fill="#eee"/></svg>
          <svg width="12" height="13" viewBox="0 0 12 13"><path d="M1 1h10v11H1z" fill="#555"/><path d="M3 1h6v4H3z" fill="#ddd"/><path d="M5 11l1-3 4-4 2 2-4 4z" fill="#d9912f"/></svg>
          <svg width="13" height="13" viewBox="0 0 13 13"><path d="M3 1h7v3H3z" fill="#eee" stroke="#666" stroke-width="0.7"/><path d="M1 4h11v6H1z" fill="#777"/><path d="M3 8h7v4H3z" fill="#eee" stroke="#666" stroke-width="0.7"/></svg>
          <svg width="12" height="11" viewBox="0 0 12 11"><path d="M1 4l4-3v2c4 0 6 2 6 6-1-2-3-3-6-3v2z" fill="#6f6f6f"/></svg>
          <svg width="6" height="4" viewBox="0 0 6 4"><path d="M0 0h6L3 4z" fill="#ddd"/></svg>
          <svg width="12" height="11" viewBox="0 0 12 11"><path d="M11 4L7 1v2C3 3 1 5 1 9c1-2 3-3 6-3v2z" fill="#979797"/></svg>
          <svg width="6" height="4" viewBox="0 0 6 4"><path d="M0 0h6L3 4z" fill="#ddd"/></svg>
          <svg width="7" height="7" viewBox="0 0 7 7"><path d="M0 0h7v1H0zM0 3h7L3.500 7z" fill="#ddd"/></svg>
        </div>
        <div class="doc">Autodesk AutoCAD 2018 - 未注册版<span>Data Extraction and Multileaders Sample.dwg - 只读</span></div>
        <div class="search">
          <i class="go"></i>
          <div class="sbox">标注样式</div>
          <svg width="15" height="14" viewBox="0 0 15 14"><path d="M1 4l1-3h3v3h5V1h3l1 3v8H9V7H6v5H1z" fill="#d8d8d8" stroke="#333" stroke-width="0.6"/></svg>
          <svg class="user" width="12" height="14" viewBox="0 0 12 14"><circle cx="6" cy="4" r="3.4" fill="none" stroke="#ddd" stroke-width="1.2"/><path d="M1 13c0-4 10-4 10 0z" fill="#ddd"/></svg>
          <span class="login">登录</span><i class="tri"></i>
          <svg class="cart" width="14" height="13" viewBox="0 0 14 13"><path d="M1 1h2l2 7h6l2-5H4" fill="none" stroke="#d2d2d2" stroke-width="1.3"/><circle cx="6" cy="11" r="1.3" fill="#d2d2d2"/><circle cx="10" cy="11" r="1.3" fill="#d2d2d2"/></svg>
          <svg class="net" width="14" height="14" viewBox="0 0 14 14"><path d="M7 1L13 12H1Z" fill="none" stroke="#c6cbe8" stroke-width="1.3"/><circle cx="7" cy="8" r="1.6" fill="#c6cbe8"/></svg>
          <i class="tri"></i>
          <svg class="help" width="15" height="15" viewBox="0 0 15 15"><circle cx="7.5" cy="7.5" r="6.5" fill="#e8e8e8" stroke="#3b6fc0" stroke-width="1.5"/><text x="7.5" y="11" font-size="10" font-weight="700" text-anchor="middle" fill="#2f5fb0" font-family="Liberation Sans">?</text></svg>
          <i class="tri"></i>
        </div>
        <div class="win">
          <svg width="10" height="10"><path d="M1 5.5h8" stroke="#777"/></svg>
          <svg width="10" height="10"><path d="M.5 2.5h7v7h-7zM2.5 2.500v-2h7v7h-2" fill="none" stroke="#444"/></svg>
          <svg width="10" height="10"><path d="M.5.5l9 9M9.5.5l-9 9" stroke="#444"/></svg>
        </div>
      </div>
      <div class="menu">
        ${['文件(F)', '编辑(E)', '视图(V)', '插入(I)', '格式(O)', '工具(T)', '绘图(D)', '标注(N)', '修改(M)', '参数(P)', '窗口(W)', '帮助(H)'].map((t) => html`<span>${t}</span>`)}
        <div class="mdi">
          <svg width="36" height="12" viewBox="0 0 36 12"><path d="M0 9h8M13.500 4.500h6v6h-6zM15.500 4.500v-3h6v6h-2M28 2l6 8M34 2l-6 8" fill="none" stroke="#1f1f1f" stroke-width="1.3"/></svg>
        </div>
      </div>
      <div class="tabs">
        <span class="on">默认</span><span>插入</span><span>注释</span><span>参数化</span><span>视图</span><span>管理</span><span>输出</span><span>附加模块</span><span>A360</span><span>精选应用</span><span class="lay">布局</span>
        <svg width="22" height="8" viewBox="0 0 22 8"><path d="M1 1h12v6H1z" fill="#c4c4c4"/><path d="M17 3l2 2 2-2" fill="#c4c4c4"/></svg>
      </div>
      <cad-ribbon></cad-ribbon>
      <div class="files">
        <div class="ft start">开始</div>
        <div class="ft act">Data Extraction an...ltileaders Sample*<em>✕</em></div>
        <div class="ft add">+</div>
      </div>
      <div class="canvas">
        ${sheet()}
        <div class="strip"></div>
        <div class="nav">
          <svg width="22" height="24" viewBox="0 0 22 24"><circle cx="10" cy="11" r="8"/><circle cx="10" cy="11" r="4"/><path d="M15 17l5 1"/></svg>
          <svg width="22" height="22" viewBox="0 0 22 22"><path d="M6 12V6M9 11V3M12 11V3M15 11V4M18 13V7M6 12c-2 1 0 8 6 8s6-4 6-7"/></svg>
          <svg width="22" height="24" viewBox="0 0 22 24"><path d="M3 3l7 7M17 3L3 19M15 16l5 5"/><circle cx="13" cy="13" r="3"/></svg>
        </div>
        <dim-dialog></dim-dialog>
        <div class="cmd">
          <div class="grip">
            <b></b>
            <svg width="10" height="10" viewBox="0 0 10 10"><path d="M1 1l8 8M9 1l-8 8" stroke="#eee" stroke-width="1.6"/></svg>
            <svg width="14" height="12" viewBox="0 0 14 12"><path d="M3 1l3 2 1 2 6 6-2 1-6-6-3-1-1-3 2 2z" fill="#ddd"/></svg>
          </div>
          <div class="prompt"><span class="chev">&gt;_</span><span class="caret">▾</span>'_dimstyle</div>
        </div>
        <div class="hint">小提示：<br />点击标注样式进入</div>
      </div>
      <div class="status">
        <div class="mtab model">模型</div>
        <div class="mtab layout">Layout1</div>
        <div class="mtab addtab">+</div>
        <div class="tools">
          <span>图纸</span>
          ${ic('M2 1v11h11M4 10h3', 14, '#a9a9a9')}
          <svg width="15" height="15"><circle cx="7.500" cy="7.500" r="6" fill="#2f6fc4"/><circle cx="7.500" cy="7.500" r="3" fill="none" stroke="#9cc2ee"/></svg><i class="tri"></i>
          ${ic('M3 1l8 12M9 2l-6 10', 16, '#8b8b8b')}<i class="tri"></i>
          ${ic('M1 12L12 4M1 12h11', 16, '#3d7ed6')}
          <svg width="14" height="14"><rect x="1" y="2" width="12" height="11" fill="none" stroke="#3d7ed6" stroke-width="1.4"/></svg><i class="tri"></i>
          ${ic('M1 2h12v10H1zM4 5v4h6V5z', 14, '#a8a8a8')}
          ${ic('M7 1l1 5 4 6-5-3-5 3 4-6z', 15, '#dcdcdc')}
          ${ic('M7 1l1 5 4 6-5-3-5 3 4-6z', 15, '#dcdcdc')}
          ${ic('M7 2a5 5 0 1 1-.1 0zM7 5a2 2 0 1 0 .1 0z', 14, '#cfcfcf')}<i class="tri"></i>
          ${ic(I.plus, 13, '#e2e2e2')}
          ${ic('M1 1h5v5H1zM8 8h5v5H8zM9 1h4v4H9z', 14, '#9f9f9f')}
          <svg width="15" height="15"><circle cx="7.500" cy="7.500" r="6.500" fill="#2f6fc4"/><path d="M5 8l2 2 3-5" stroke="#dbe9fa" fill="none"/></svg>
          ${ic('M2 12V4l5-3 5 3v8z', 14, '#7fb04f')}
          ${ic('M2 2h3v3H2zM9 9h3v3H9zM4 4l6 6', 14, '#d99a3c')}
          ${ic('M1 2h12v10H1zM3 8l3-3M8 9l3-3', 14, '#cfcfcf')}
          ${ic('M1 2h12v2H1zM1 6h12v2H1zM1 10h12v2H1z', 14, '#d4d4d4')}
        </div>
      </div>
      <span class="app">A</span>
      <div class="stamp">秒d<span class="play"></span>ng视频</div>
      <div class="mark">
        <svg width="48" height="52" viewBox="0 0 48 52">
          <path d="M13 4C8 2 3 5 3 10V38C3 44 7 47 11 47M13 7L42 22C47 25 47 29 42 32L20 48C15 51 10 48 9 44V13" fill="none" stroke="#c9c9c9" stroke-width="3.4" stroke-linejoin="round"/>
          <path d="M19 20L30 26 19 33Z" fill="#c9c9c9"/><path d="M33 20V33" stroke="#c9c9c9" stroke-width="2"/>
        </svg>
        <div class="words">
          <div class="brand">溜溜自学</div>
          <div class="url">ZIXUE.3D66.COM</div>
        </div>
      </div>
    `;
  }
}
